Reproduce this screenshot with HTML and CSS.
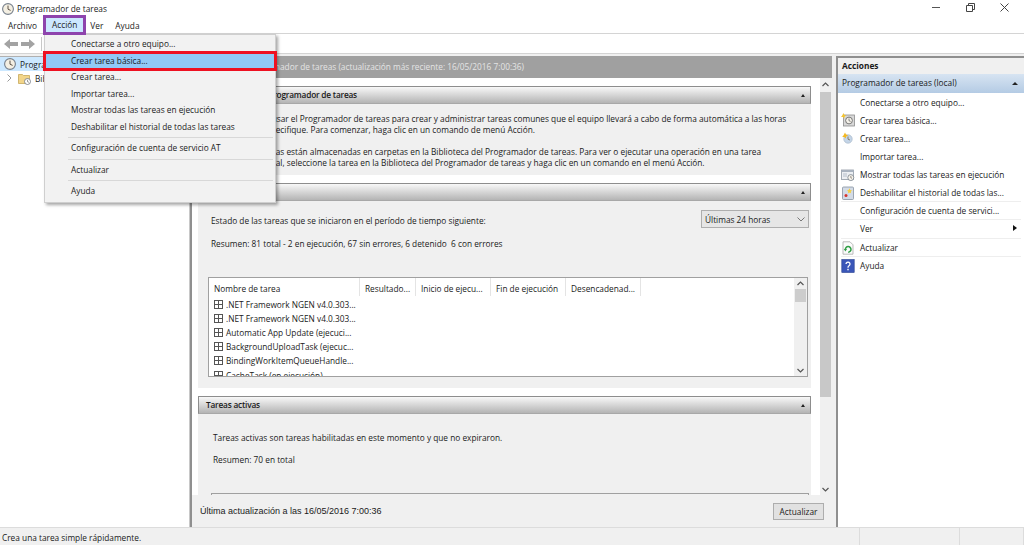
FILE: index.html
```html
<!DOCTYPE html>
<html lang="es">
<head>
    <meta charset="UTF-8">
    <title>Programador de tareas</title>
    <link rel="stylesheet" href="styles.css">
</head>
<body>
<svg class="defs" width="0" height="0">
    <symbol id="clock" viewBox="0 0 12 12">
        <circle cx="6" cy="6" r="5.4" fill="#f4efe2" stroke="#77808c" stroke-width="1.1"/>
        <path d="M6 2.6V6.2L8.6 7.4" fill="none" stroke="#5d5348" stroke-width="1"/>
    </symbol>
    <symbol id="star-clock" viewBox="0 0 14 14">
        <rect x="2.5" y="2" width="11" height="11" fill="#d8d8d8" stroke="#8d8d8d" stroke-width=".8"/>
        <circle cx="8" cy="7.5" r="3.4" fill="#f5f2ea" stroke="#6b6b6b" stroke-width=".9"/>
        <path d="M8 5.5V7.7L9.6 8.4" fill="none" stroke="#555" stroke-width=".7"/>
        <path d="M2.5 0 3.4 2 5.4 2.6 3.6 3.6 3.2 5.6 1.9 4 0 4 1.2 2.5Z" fill="#f4c430"/>
    </symbol>
    <symbol id="star-small" viewBox="0 0 14 14">
        <circle cx="7" cy="8" r="4.2" fill="#c4d5e8" stroke="#a7b7c8" stroke-width=".7"/>
        <path d="M7 5.5V8.2L9 9" fill="none" stroke="#7a6a50" stroke-width=".8"/>
        <path d="M4 1.5 5 3.6 7.2 4.2 5.2 5.4 4.8 7.6 3.4 6 1.2 6 2.6 4.2Z" fill="#f4b820"/>
    </symbol>
    <symbol id="running" viewBox="0 0 14 14">
        <rect x=".5" y="2" width="12" height="9.5" fill="#eceff3" stroke="#8f98a3" stroke-width=".8"/>
        <rect x=".5" y="2" width="12" height="2" fill="#a8b2bf"/>
        <path d="M2 6H6M2 8H6" stroke="#a8b2bf" stroke-width=".8"/>
        <circle cx="9.8" cy="9.6" r="3" fill="#f5f2ea" stroke="#77808c" stroke-width=".8"/>
        <path d="M9.8 8V9.8L11 10.3" fill="none" stroke="#5d5348" stroke-width=".6"/>
    </symbol>
    <symbol id="history" viewBox="0 0 14 14">
        <rect x="1.5" y="1" width="11" height="12.5" rx="1" fill="#d3dbe6" stroke="#8792a1" stroke-width=".8"/>
        <path d="M8.5 2.2 9.3 4 11 4.4 9.7 5.5 10 7.2 8.5 6.4 7 7.2 7.3 5.5 6 4.4 7.7 4Z" fill="#f6cf3c"/>
        <circle cx="5" cy="9.6" r="1.5" fill="#d8342c"/>
    </symbol>
    <symbol id="refresh" viewBox="0 0 14 14">
        <path d="M2 .8H9L12 3.8V13.2H2Z" fill="#fbfbfb" stroke="#a9a9a9" stroke-width=".8"/>
        <path d="M4.4 8.6A2.8 2.8 0 1 1 7.2 11.2" fill="none" stroke="#2f9e44" stroke-width="1.5"/>
        <path d="M2.8 8 6 8 4.4 10.4Z" fill="#2f9e44"/>
    </symbol>
    <symbol id="help" viewBox="0 0 14 14">
        <rect x=".8" y=".5" width="12.4" height="13" fill="#3a56b8" stroke="#27408f" stroke-width=".6"/>
        <path d="M5 5A2 2 0 1 1 8 6.8C7.2 7.3 7 7.7 7 8.8" fill="none" stroke="#fff" stroke-width="1.3"/>
        <rect x="6.3" y="9.8" width="1.4" height="1.5" fill="#fff"/>
    </symbol>
    <symbol id="plus-box" viewBox="0 0 9 9">
        <rect x=".5" y=".5" width="8" height="8" fill="#fff" stroke="#555" stroke-width="1"/>
        <path d="M4.5 .5V8.5M.5 4.5H8.5" stroke="#555" stroke-width="1"/>
    </symbol>
</svg>

<div class="window">
    <header class="titlebar">
        <svg class="app-icon"><use href="#clock"/></svg>
        <span class="app-title">Programador de tareas</span>
        <div class="win-controls">
            <svg width="9" height="9" viewBox="0 0 9 9"><path d="M0 4.5H8" stroke="#555" stroke-width="1"/></svg>
            <svg width="9" height="9" viewBox="0 0 9 9"><path d="M.5 2.5H6.5V8.5H.5ZM2.5 2.5V.5H8.5V6.5H6.5" fill="none" stroke="#444" stroke-width="1"/></svg>
            <svg width="9" height="9" viewBox="0 0 9 9"><path d="M.5 .5 8.5 8.5M8.5 .5 .5 8.5" stroke="#444" stroke-width="1"/></svg>
        </div>
    </header>

    <nav class="menubar">
        <span class="menubar-item item-archivo">Archivo</span>
        <span class="menubar-item item-accion">Acción</span>
        <span class="menubar-item item-ver">Ver</span>
        <span class="menubar-item">Ayuda</span>
    </nav>

    <div class="toolbar">
        <svg width="14" height="10" viewBox="0 0 14 10"><path d="M0 5 6 0V3H14V7H6V10Z" fill="#a3a3a3"/></svg>
        <svg width="14" height="10" viewBox="0 0 14 10"><path d="M14 5 8 0V3H0V7H8V10Z" fill="#a3a3a3"/></svg>
        <span class="toolbar-sep"></span>
    </div>

    <div class="panes">
        <aside class="tree">
            <div class="tree-row selected">
                <svg class="tree-icon"><use href="#clock"/></svg>
                <span>Programador de tareas (local)</span>
            </div>
            <div class="tree-row child">
                <svg class="tree-chevron" width="5" height="8" viewBox="0 0 5 8"><path d="M.5 .5 4 4 .5 7.5" fill="none" stroke="#999" stroke-width="1"/></svg>
                <svg class="folder" width="13" height="13" viewBox="0 0 13 13">
                    <path d="M.5 2.5H4.5L5.5 3.5H11.5V11.5H.5Z" fill="#f2d58a" stroke="#c7a85a" stroke-width=".8"/>
                    <circle cx="9.5" cy="9.5" r="3" fill="#fff" stroke="#6d7580" stroke-width=".8"/>
                    <path d="M9.5 7.8V9.7L11 10.3" fill="none" stroke="#555" stroke-width=".6"/>
                </svg>
                <span>Biblioteca del Programador de tareas</span>
            </div>
        </aside>

        <main class="center">
            <div class="center-head">Resumen del Programador de tareas (actualización más reciente: 16/05/2016 7:00:36)</div>
            <div class="center-scroll">
                <div class="sections">
                    <section class="section">
                        <h2 class="section-head">Información del Programador de tareas<i class="arrow-up"></i></h2>
                        <div class="section-body intro">
                            <p>Puede usar el Programador de tareas para crear y administrar tareas comunes que el equipo llevará a cabo de forma automática a las horas que especifique. Para comenzar, haga clic en un comando de menú Acción.</p>
                            <p>Las tareas están almacenadas en carpetas en la Biblioteca del Programador de tareas. Para ver o ejecutar una operación en una tarea individual, seleccione la tarea en la Biblioteca del Programador de tareas y haga clic en un comando en el menú Acción.</p>
                        </div>
                    </section>

                    <section class="section">
                        <h2 class="section-head">Estado de tareas<i class="arrow-up"></i></h2>
                        <div class="section-body status">
                            <div class="status-row">
                                <span class="status-label">Estado de las tareas que se iniciaron en el período de tiempo siguiente:</span>
                                <div class="select">
                                    <span>Últimas 24 horas</span>
                                    <svg width="8" height="5" viewBox="0 0 8 5"><path d="M.5 .5 4 4 7.5 .5" fill="none" stroke="#777" stroke-width="1"/></svg>
                                </div>
                            </div>
                            <p class="summary">Resumen: 81 total - 2 en ejecución, 67 sin errores, 6 detenido  6 con errores</p>
                            <div class="grid-box">
                                <div class="grid-main">
                                    <div class="grid-head">
                                        <span class="col-name">Nombre de tarea</span>
                                        <span class="col-result">Resultado...</span>
                                        <span class="col-time">Inicio de ejecu...</span>
                                        <span class="col-time">Fin de ejecución</span>
                                        <span class="col-time">Desencadenad...</span>
                                    </div>
                                    <ul class="grid-rows">
                                        <li><svg class="plus"><use href="#plus-box"/></svg>.NET Framework NGEN v4.0.303...</li>
                                        <li><svg class="plus"><use href="#plus-box"/></svg>.NET Framework NGEN v4.0.303...</li>
                                        <li><svg class="plus"><use href="#plus-box"/></svg>Automatic App Update (ejecuci...</li>
                                        <li><svg class="plus"><use href="#plus-box"/></svg>BackgroundUploadTask (ejecuc...</li>
                                        <li><svg class="plus"><use href="#plus-box"/></svg>BindingWorkItemQueueHandle...</li>
                                        <li><svg class="plus"><use href="#plus-box"/></svg>CacheTask (en ejecución)</li>
                                    </ul>
                                </div>
                                <div class="grid-scroll">
                                    <svg width="7" height="5" viewBox="0 0 7 5"><path d="M.5 4 3.5 1 6.5 4" fill="none" stroke="#555" stroke-width="1.2"/></svg>
                                    <span class="grid-thumb"></span>
                                    <svg class="grid-down" width="7" height="5" viewBox="0 0 7 5"><path d="M.5 1 3.5 4 6.5 1" fill="none" stroke="#555" stroke-width="1.2"/></svg>
                                </div>
                            </div>
                        </div>
                    </section>

                    <section class="section">
                        <h2 class="section-head">Tareas activas<i class="arrow-up"></i></h2>
                        <div class="section-body active">
                            <p>Tareas activas son tareas habilitadas en este momento y que no expiraron.</p>
                            <p class="active-total">Resumen: 70 en total</p>
                            <div class="active-box"></div>
                        </div>
                    </section>
                </div>
                <div class="vscroll">
                    <svg width="7" height="5" viewBox="0 0 7 5"><path d="M.5 4 3.5 1 6.5 4" fill="none" stroke="#555" stroke-width="1.2"/></svg>
                    <span class="vscroll-thumb"></span>
                    <svg width="7" height="5" viewBox="0 0 7 5"><path d="M.5 1 3.5 4 6.5 1" fill="none" stroke="#555" stroke-width="1.2"/></svg>
                </div>
            </div>
            <div class="center-foot">
                <span class="foot-text">Última actualización a las 16/05/2016 7:00:36</span>
                <button class="btn" type="button">Actualizar</button>
            </div>
        </main>

        <aside class="actions">
            <div class="actions-title">Acciones</div>
            <div class="actions-group">Programador de tareas (local)<i class="arrow-up dark"></i></div>
            <ul class="actions-list">
                <li>Conectarse a otro equipo...</li>
                <li><svg class="act-icon"><use href="#star-clock"/></svg>Crear tarea básica...</li>
                <li><svg class="act-icon"><use href="#star-small"/></svg>Crear tarea...</li>
                <li>Importar tarea...</li>
                <li><svg class="act-icon"><use href="#running"/></svg>Mostrar todas las tareas en ejecución</li>
                <li class="rule"><svg class="act-icon"><use href="#history"/></svg>Deshabilitar el historial de todas las...</li>
                <li class="rule">Configuración de cuenta de servici...</li>
                <li class="rule">Ver<i class="arrow-right"></i></li>
                <li class="rule"><svg class="act-icon"><use href="#refresh"/></svg>Actualizar</li>
                <li><svg class="act-icon"><use href="#help"/></svg>Ayuda</li>
            </ul>
        </aside>
    </div>

    <footer class="statusbar">
        <span class="status-main">Crea una tarea simple rápidamente.</span>
        <span class="status-cell"></span>
        <span class="status-cell last"></span>
    </footer>
</div>

<div class="menu">
    <div class="menu-item">Conectarse a otro equipo...</div>
    <div class="menu-item hot">Crear tarea básica...</div>
    <div class="menu-item">Crear tarea...</div>
    <div class="menu-item">Importar tarea...</div>
    <div class="menu-item">Mostrar todas las tareas en ejecución</div>
    <div class="menu-item">Deshabilitar el historial de todas las tareas</div>
    <div class="menu-sep"></div>
    <div class="menu-item">Configuración de cuenta de servicio AT</div>
    <div class="menu-sep"></div>
    <div class="menu-item">Actualizar</div>
    <div class="menu-sep"></div>
    <div class="menu-item">Ayuda</div>
</div>
</body>
</html>
```

FILE: styles.css
```css
* {
    box-sizing: border-box;
    margin: 0;
    padding: 0;
}

body {
    font-family: "Open Sans", "Noto Sans", sans-serif;
    font-size: 8.3px;
    color: #1a1a1a;
    background: #f0f0f0;
    height: 100vh;
    overflow: hidden;
}

.defs {
    position: absolute;
}

.window {
    height: 545px;
    display: flex;
    flex-direction: column;
}

/* title + menu */
.titlebar {
    height: 17px;
    background: #fff;
    display: flex;
    align-items: center;
    padding-left: 2px;
}

.app-icon {
    width: 12px;
    height: 12px;
    margin-right: 3px;
}

.win-controls {
    margin-left: auto;
    display: flex;
    gap: 25px;
    padding-right: 15px;
    margin-top: -2px;
}

.menubar {
    height: 17px;
    background: #fff;
    border-bottom: 1px solid #d4d4d4;
    display: flex;
    align-items: center;
    padding-left: 8px;
}

.menubar-item {
    margin-right: 12px;
}

.item-archivo {
    margin-right: 6px;
}

.item-accion {
    background: #cce8ff;
    border: 3px solid #8e44ad;
    height: 20px;
    margin: -1px 4px 0 0;
    padding: 0 6px;
    line-height: 14px;
    position: relative;
    z-index: 3;
}

.toolbar {
    height: 20px;
    background: #fff;
    border-bottom: 1px solid #d4d4d4;
    display: flex;
    align-items: center;
    gap: 3px;
    padding-left: 4px;
}

.toolbar-sep {
    width: 1px;
    height: 14px;
    background: #c8c8c8;
    margin-left: 3px;
}

/* three panes */
.panes {
    flex: 1;
    display: flex;
    min-height: 0;
    padding-top: 2px;
}

.tree {
    width: 190px;
    background: #fff;
    border-top: 1px solid #b0b0b0;
    border-right: 1px solid #c8c8c8;
    overflow: hidden;
    white-space: nowrap;
}

.tree-row {
    height: 14px;
    display: flex;
    align-items: center;
}

.tree-row.selected {
    background: #cce8ff;
    padding-left: 4px;
}

.tree-icon {
    width: 12px;
    height: 12px;
    margin-right: 4px;
}

.tree-chevron {
    margin: 0 4px 0 7px;
}

.folder {
    margin: 0 4px 0 2px;
}

.center {
    width: 642px;
    margin-right: 4px;
    border-left: 2px solid #8f8f8f;
    display: flex;
    flex-direction: column;
    min-height: 0;
    background: #f0f0f0;
}

.center-head {
    height: 22px;
    background: #a0a0a0;
    color: #e4e4e4;
    padding-left: 2px;
    line-height: 22px;
    white-space: nowrap;
    flex: none;
}

.center-scroll {
    flex: 1;
    display: flex;
    min-height: 0;
    overflow: hidden;
}

.sections {
    width: 628px;
    background: #fff;
    padding: 8px 9px 0 6px;
    overflow: hidden;
}

.section {
    margin-bottom: 8px;
}

.section-head {
    height: 18px;
    font-size: 8.3px;
    font-weight: 600;
    letter-spacing: -0.2px;
    line-height: 16px;
    padding-left: 7px;
    border: 1px solid #8d8d8d;
    border-bottom-color: #a8a8a8;
    background: linear-gradient(#f8f8f8, #b4b4b4);
    position: relative;
}

.arrow-up {
    position: absolute;
    right: 5px;
    top: 7px;
    border: 2.5px solid transparent;
    border-top: 0;
    border-bottom: 3px solid #222;
}

.section-body {
    background: #f0f0f0;
}

.intro {
    height: 71px;
    padding: 9px 15px 0 47px;
    line-height: 11.3px;
}

.intro p + p {
    margin-top: 10.5px;
}

.status {
    height: 187px;
    padding: 9px 2px 0 13px;
}

.status-row {
    display: flex;
    justify-content: space-between;
    align-items: center;
    height: 18px;
}

.status-label {
    margin-top: 2px;
}

.select {
    width: 108px;
    height: 18px;
    border: 1px solid #aeaeae;
    background: #e6e6e6;
    display: flex;
    align-items: center;
    justify-content: space-between;
    padding: 0 3px 0 3px;
}

.summary {
    margin-top: 10px;
    white-space: pre;
}

.grid-box {
    margin: 28px 0 0 -3px;
    height: 100px;
    width: 600px;
    border: 1px solid #a0a0a0;
    background: #fff;
    display: flex;
}

.grid-main {
    flex: 1;
    min-width: 0;
    overflow: hidden;
}

.grid-head {
    display: flex;
    height: 18px;
    line-height: 21px;
}

.grid-head span {
    border-right: 1px solid #e4e4e4;
    padding-left: 5px;
    white-space: nowrap;
    overflow: hidden;
}

.col-name {
    width: 151px;
}

.col-result {
    width: 56px;
}

.col-time {
    width: 75px;
}

.grid-rows {
    list-style: none;
    padding: 1px 0 0 5px;
    height: 80px;
    overflow: hidden;
}

.grid-rows li {
    height: 14.2px;
    display: flex;
    align-items: center;
    white-space: nowrap;
}

.plus {
    width: 9px;
    height: 9px;
    margin-right: 3px;
}

.grid-scroll {
    width: 13px;
    background: #f0f0f0;
    display: flex;
    flex-direction: column;
    align-items: center;
    padding: 3px 0;
}

.grid-thumb {
    width: 11px;
    height: 13px;
    background: #cdcdcd;
    margin-top: 3px;
}

.grid-down {
    margin-top: auto;
}

.active {
    height: 120px;
    padding: 18px 0 0 15px;
}

.active-total {
    margin-top: 11px;
}

.active-box {
    margin: 28px 2px 0 -2px;
    height: 30px;
    border: 1px solid #a0a0a0;
    background: #f0f0f0;
}

.vscroll {
    width: 11px;
    display: flex;
    flex-direction: column;
    align-items: center;
    justify-content: space-between;
    padding: 4px 0 3px;
    background: #f0f0f0;
}

.vscroll-thumb {
    flex: 1;
    width: 11px;
    background: #c8c8c8;
    margin: 5px 0 90px;
}

.center-foot {
    height: 32px;
    flex: none;
    display: flex;
    align-items: center;
    justify-content: space-between;
    padding: 0 8px 0 8px;
}

.foot-text {
    font-family: "Liberation Sans", Arial, sans-serif;
    font-size: 9px;
}

.btn {
    width: 51px;
    height: 17px;
    font: inherit;
    color: inherit;
    background: #e1e1e1;
    border: 1px solid #adadad;
}

.actions {
    flex: 1;
    background: #fff;
    border-left: 2px solid #8f8f8f;
    border-top: 2px solid #8f8f8f;
}

.actions-title {
    height: 16px;
    background: #f0f0f0;
    font-weight: 700;
    line-height: 16px;
    padding-left: 4px;
}

.actions-group {
    height: 19px;
    line-height: 18px;
    padding-left: 4px;
    background: linear-gradient(#d7e4f2, #b4cbe4);
    position: relative;
}

.actions-group .arrow-up {
    right: 6px;
    top: 8px;
    border-width: 3px;
    border-top: 0;
}

.actions-list {
    list-style: none;
}

.actions-list li {
    height: 18.2px;
    display: flex;
    align-items: center;
    padding-left: 22px;
    position: relative;
    white-space: nowrap;
}

.actions-list li.rule {
    margin: 0 3px;
    padding-left: 19px;
    border-bottom: 1px solid #eeeeee;
}

.act-icon {
    position: absolute;
    left: 3px;
    top: 2px;
    width: 14px;
    height: 14px;
}

.rule .act-icon {
    left: 0;
}

.arrow-right {
    position: absolute;
    right: 4px;
    top: 5px;
    border: 3px solid transparent;
    border-right: 0;
    border-left: 4px solid #111;
}

.statusbar {
    height: 18px;
    border-top: 1px solid #dcdcdc;
    background: #f0f0f0;
    display: flex;
    align-items: center;
    flex: none;
}

.status-main {
    width: 859px;
    padding-left: 2px;
    height: 100%;
    line-height: 19px;
}

.status-cell {
    width: 100px;
    height: 100%;
    border-left: 1px solid #dcdcdc;
}

.status-cell.last {
    width: 65px;
    border-right: 1px solid #dcdcdc;
}

/* open Acción menu */
.menu {
    position: absolute;
    left: 44px;
    top: 34px;
    width: 232px;
    height: 169px;
    background: #f2f2f2;
    border: 1px solid #cfcfcf;
    box-shadow: 2px 2px 3px rgba(0, 0, 0, 0.35);
    padding-top: 1px;
    z-index: 2;
}

.menu-item {
    height: 16.5px;
    line-height: 16.5px;
    padding-left: 26px;
    white-space: nowrap;
}

.menu-item.hot {
    background: #91c9f7;
    outline: 3px solid #ee1122;
    outline-offset: -1px;
}

.menu-sep {
    height: 1px;
    margin: 2px 2px 2px 23px;
    background: #d8d8d8;
}
```
